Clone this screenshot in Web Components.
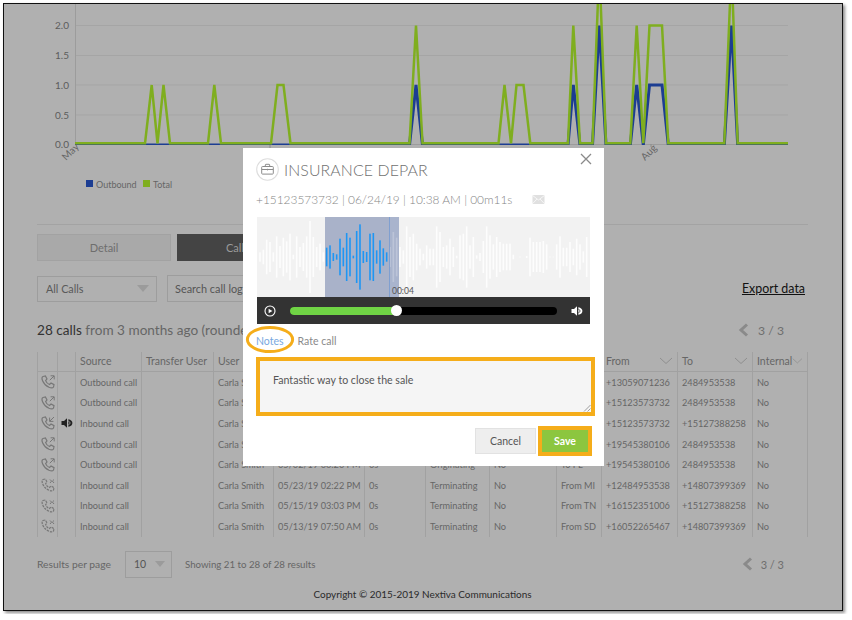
<!DOCTYPE html>
<html><head><meta charset="utf-8">
<style>
html,body{margin:0;padding:0;background:#fff;font-family:Lato,"Open Sans",sans-serif}
</style></head><body>
<call-app>
  <call-chart></call-chart>
  <call-controls></call-controls>
  <call-table></call-table>
  <call-footer></call-footer>
  <call-modal></call-modal>
</call-app>
<script>
const CHEV=(w=14,c='#8f8f8f')=>`<svg width="${w}" height="8" viewBox="0 0 14 8"><path d="M1 1l6 5.5L13 1" fill="none" stroke="${c}" stroke-width="1"/></svg>`;
const PAGER=(s)=>`<span class="pg" style="${s||''}"><svg width="11" height="14" viewBox="0 0 11 14"><path d="M9 1.5L3 7l6 5.5" fill="none" stroke="#8a8a8a" stroke-width="3"/></svg><span>3 / 3</span></span>`;
const PHONE='M3 2.5L5.4 2 7 5 5.6 6.6C6.3 8.5 7.6 9.8 9.5 10.5L11 9l3 1.6-.5 2.4c-.6 1-2.5 1.1-4.5.3C6 12 4 10 2.7 7 1.8 5 2 3 3 2.5Z';
const SPK=(c)=>`<svg width="12" height="12" viewBox="0 0 12 12"><path d="M.5 4H3L6 1.2v9.6L3 8H.5Z" fill="${c}"/><path d="M7.3 2.2C10 2.6 11.4 4.3 11.4 6S10 9.4 7.3 9.8Z" fill="${c}"/><path d="M7.3 4.2C8.4 4.4 9 5.2 9 6S8.4 7.6 7.3 7.8" fill="none" stroke="${c==='#fff'?'#333':'#b0b0b0'}" stroke-width=".8"/></svg>`;

class CallApp extends HTMLElement{constructor(){super();this.attachShadow({mode:'open'}).innerHTML=`<style>
:host{display:block;position:relative;box-sizing:border-box;width:840px;height:608px;margin:3px;border:1px solid #111;background:#b0b0b0;box-shadow:2px 2px 3px rgba(0,0,0,.45);padding:0 34px 0 33px;overflow:hidden;color:#666;font-family:Lato,"Open Sans",sans-serif}
</style><slot></slot>`}}

class CallChart extends HTMLElement{constructor(){super();
const B=143.3,V1=85,V2=25.5,V3=-34,BB=145;
const g=(a,b)=>[[75,b],...a,[788,b]].map(p=>p.join(',')).join(' ');
const green=g([[145,B],[151.7,V1],[157.5,B],[163.5,V1],[170,B],[208,B],[214.3,V1],[221,B],[271,B],[277.5,V1],[283.5,V1],[290.5,B],[409.5,B],[416,V2],[422.5,B],[498.5,B],[504.5,V1],[511,B],[516.5,V1],[523.5,V1],[530.3,B],[568,B],[573.3,V2],[580,B],[592.5,B],[599.3,V3],[606,B],[630.3,B],[636.7,V2],[643.3,B],[649.5,V2],[662,V2],[668.3,B],[724.3,B],[731.5,V3],[737.7,B]],B);
const blue=g([[409.5,BB],[416,V1],[422.5,BB],[568,BB],[573.3,V1],[580,BB],[592.5,BB],[599.3,V2],[606,BB],[630.3,BB],[636.7,V1],[643.3,BB],[649.5,V1],[662,V1],[668.3,BB],[724.3,BB],[731.5,V2],[737.7,BB]],BB);
this.attachShadow({mode:'open'}).innerHTML=`<style>
:host{display:block;height:220px;margin:0 -34px 0 -33px;border-bottom:0}
svg{display:block}
text{font-family:Lato,sans-serif;font-size:10px;fill:#5c5c5c}
.s{font-size:9px;fill:#666}
</style>
<svg width="838" height="220" viewBox="4 4 838 220">
<defs><clipPath id="c"><rect x="0" y="0" width="850" height="145"/></clipPath></defs>
<g stroke="#a5a5a5" stroke-width="1"><path d="M75 25.5H788M75 55.5H788M75 85H788M75 115H788"/></g>
<path d="M75.5 4V144M75 144.5H788" stroke="#9c9c9c" fill="none"/>
<path d="M270 144v4M651 144v3" stroke="#8a8a8a"/>
<text x="55" y="29">2.0</text><text x="55" y="59">1.5</text><text x="55" y="88.5">1.0</text><text x="55" y="118.5">0.5</text><text x="55" y="147.5">0.0</text>
<polyline clip-path="url(#c)" points="${blue}" fill="none" stroke="#1c3d92" stroke-width="3" stroke-linejoin="miter"/>
<polyline points="${green}" fill="none" stroke="#7fae1f" stroke-width="2.5" stroke-linejoin="miter" stroke-miterlimit="4"/>
<text class="s" style="font-size:10px" transform="translate(66 161) rotate(-45)">May</text>
<text class="s" style="font-size:10px" transform="translate(645 161) rotate(-45)">Aug</text>
<rect x="86" y="180" width="7" height="7" fill="#1c3d92"/><text class="s" x="96" y="187.5">Outbound</text>
<rect x="143" y="180" width="7" height="7" fill="#7fae1f"/><text class="s" x="153" y="187.5">Total</text>
</svg>`}}

class CallControls extends HTMLElement{constructor(){super();this.attachShadow({mode:'open'}).innerHTML=`<style>
:host{display:block;border-top:1px solid #a3a3a3;font-size:11.5px;color:#5f5f5f}
.tabs{display:flex;gap:6px;margin-top:9px;height:27px}
.tab{box-sizing:border-box;width:134px;display:flex;align-items:center;justify-content:center;background:#a9a9a9;border:1px solid #a2a2a2;color:#6e6e6e;font-size:11px}
.tab.on{background:#444;border-color:#444;color:#9a9a9a;width:116px}
.filters{display:flex;align-items:center;gap:10px;margin-top:14px;height:27px}
.sel{box-sizing:border-box;width:120px;height:26px;border:1px solid #9d9d9d;display:flex;align-items:center;justify-content:space-between;padding:0 7px 0 8px;font-size:10.8px;color:#5a5a5a}
.arrow{width:0;height:0;border:6px solid transparent;border-top:7px solid #9b9b9b;border-bottom:0}
.search{box-sizing:border-box;width:200px;height:27px;border:1px solid #9d9d9d;padding-left:7px;display:flex;align-items:center;font-size:10.9px;color:#555}
.export{margin-left:auto;margin-right:3px;color:#111;text-decoration:underline;font-size:12.4px}
.sum{display:flex;align-items:center;justify-content:space-between;margin-top:18px;height:20px;font-size:13.6px;color:#666}
.sum b{font-weight:400;color:#333}
.pg{display:inline-flex;align-items:center;gap:9px;margin-right:24px;font-size:12.2px;color:#6e6e6e}
</style>
<div class="tabs"><div class="tab">Detail</div><div class="tab on">Call</div></div>
<div class="filters"><div class="sel">All Calls<span class="arrow"></span></div><div class="search">Search call log</div><span class="export">Export data</span></div>
<div class="sum"><span><b>28 calls</b> from 3 months ago (rounded)</span>${PAGER()}</div>`}}

class CallTable extends HTMLElement{constructor(){super();
const cols=[20,18,66,72,60,91,61,64,67,45,76,75,56];
const ph=(t)=>{const arrow={o:'<path d="M9.8 6.2L14 2M10.6 1.8H14.2V5.4" fill="none" stroke="#777" stroke-width="1"/>',i:'<path d="M14 2L9.8 6.2M9.6 2.6V6.4H13.4" fill="none" stroke="#777" stroke-width="1"/>',t:'<path d="M10 2.5l1.6 1.6M14 2.5l-1.6 1.6L14 6M10 6l1.6-1.9" fill="none" stroke="#777" stroke-width="1"/>'}[t];
return `<svg width="16" height="16" viewBox="0 0 16 16"><path d="${PHONE}" fill="none" stroke="#777" stroke-width="1.2" ${t==='t'?'stroke-dasharray="2.4 .9"':''}/>${arrow}</svg>`};
const rows=[
['o','','Outbound call','Carla Smith','','','','','','+13059071236','2484953538','No'],
['o','','Outbound call','Carla Smith','','','','','','+15123573732','2484953538','No'],
['i','s','Inbound call','Carla Smith','','','','','','+15123573732','+15127388258','No'],
['o','','Outbound call','Carla Smith','','','','','','+19545380106','2484953538','No'],
['o','','Outbound call','Carla Smith','05/02/19 06:20 PM','0s','Originating','No','To FL','+19545380106','2484953538','No'],
['t','','Inbound call','Carla Smith','05/23/19 02:22 PM','0s','Terminating','No','From MI','+12484953538','+14807399369','No'],
['t','','Inbound call','Carla Smith','05/15/19 03:03 PM','0s','Terminating','No','From TN','+16152351006','+15127388258','No'],
['t','','Inbound call','Carla Smith','05/13/19 07:50 AM','0s','Terminating','No','From SD','+16052265467','+14807399369','No']];
const head=['','','Source','Transfer User','User','','','','','','From','To','Internal'];
const ch={10:1,11:1,12:1};
let h='';
head.forEach((t,i)=>{h+=`<div class="c h${i===12?' end':''}"><span>${t}</span>${ch[i]?CHEV():''}</div>`});
rows.forEach(r=>{
 h+=`<div class="c ic">${ph(r[0])}</div><div class="c ic">${r[1]?SPK('#222'):''}</div>`;
 h+=`<div class="c">${r[2]}</div><div class="c"></div>`;
 r.slice(3).forEach((t,i,a)=>h+=`<div class="c${i===a.length-1?' end':''}">${t}</div>`);
});
this.attachShadow({mode:'open'}).innerHTML=`<style>
:host{display:grid;grid-template-columns:${cols.join('px ')}px;grid-auto-rows:20.6px;grid-template-rows:20px;margin-top:12px;padding-bottom:1px;font-size:9.2px;color:#666}
.c{box-sizing:border-box;border-left:1px solid #a1a1a1;padding-left:4px;display:flex;align-items:center;white-space:nowrap;overflow:hidden;min-width:0}
.c.end{border-right:1px solid #a1a1a1}
.h{border-bottom:1px solid #a1a1a1;justify-content:space-between;padding:0 4px 2px 4px;font-size:10.5px;height:20px}
.ic{padding-left:1px;justify-content:center}
</style>${h}`;
}}

class CallFooter extends HTMLElement{constructor(){super();this.attachShadow({mode:'open'}).innerHTML=`<style>
:host{display:block;font-size:10.3px;color:#666}
.bar{display:flex;align-items:center;margin-top:13px;height:27px}
.sel{box-sizing:border-box;width:47px;height:27px;border:1px solid #9d9d9d;margin:0 13px 0 14px;display:flex;align-items:center;justify-content:space-between;padding:0 6px 0 8px;color:#555;font-size:10.5px}
.arrow{width:0;height:0;border:5px solid transparent;border-top:6px solid #9b9b9b;border-bottom:0}
.show{font-size:9.7px}
.pg{display:inline-flex;align-items:center;gap:8px;margin-left:auto;margin-right:24px;font-size:11px;color:#6e6e6e}
.copy{margin-top:8px;height:16px;line-height:16px;text-align:center;color:#2a2a2a;font-size:9.95px}
</style>
<div class="bar"><span>Results per page</span><div class="sel">10<span class="arrow"></span></div><span class="show">Showing 21 to 28 of 28 results</span>${PAGER()}</div>
<div class="copy">Copyright © 2015-2019 Nextiva Communications</div>`}}

class CallWave extends HTMLElement{constructor(){super();
const hs=[14,22,52,45,14,62,33,58,47,70,7,62,30,42,62,108,60,30,40,14,28,35,12,8,55,28,72,58,4,78,98,18,15,70,72,20,50,26,14,30,75,58,30,20,92,60,70,40,25,10,35,25,25,92,75,30,35,55,30,4,65,70,92,35,60,5,12,48,92,65,38,60,45,40,40,40,7,0,1,0,3,58,45,45,45,48,38,1,1,38,62,28,28,45,25,55,38,17,60];
let b='';hs.forEach((h,i)=>{if(!h)return;const x=260+i*3.3333-0.8,hh=h/3;const blue=i>=20&&i<=38;b+=`<rect x="${x-257}" y="${40-hh}" width="1.6" height="${2*hh}" fill="${blue?'#1e96f3':'#fff'}" ${blue?'':'opacity=".85"'}/>`});
this.attachShadow({mode:'open'}).innerHTML=`<style>
:host{display:block;position:relative;width:333px;height:80px;background:#f2f2f2;overflow:hidden}
svg{display:block;position:relative}
.sel{position:absolute;left:68px;top:0;width:74px;height:80px;background:rgba(80,100,150,.45)}
.cur{position:absolute;left:132px;top:0;width:1px;height:80px;background:#7f9fd0}
.t{position:absolute;left:135px;top:69px;font-size:8.5px;line-height:11px;color:#555}
.sel2{position:absolute;left:132px;top:0;width:10px;height:80px;background:rgba(170,180,205,.75)}
</style><div class="sel"></div><svg width="333" height="80">${b}</svg><div class="sel2"></div><div class="cur"></div><span class="t">00:04</span>`}}

class CallPlayer extends HTMLElement{constructor(){super();this.attachShadow({mode:'open'}).innerHTML=`<style>
:host{display:flex;align-items:center;box-sizing:border-box;width:333px;height:27px;background:#333;padding:0 8px 0 7px}
svg{display:block;flex:none}
.track{position:relative;flex:none;width:267px;height:8px;border-radius:4px;background:#000;margin:0 14px 0 14px}
.fill{width:106px;height:8px;border-radius:4px;background:#70d445}
.dot{position:absolute;left:101px;top:-1.5px;width:11px;height:11px;border-radius:50%;background:#fff}
</style>
<svg width="12" height="12" viewBox="0 0 12 12"><circle cx="6" cy="6" r="5" fill="none" stroke="#fff" stroke-width="1.1"/><path d="M4.6 3.7L8.4 6 4.6 8.3Z" fill="#fff"/></svg>
<div class="track"><div class="fill"></div><div class="dot"></div></div>${SPK('#fff')}`}}

class CallModal extends HTMLElement{constructor(){super();this.attachShadow({mode:'open'}).innerHTML=`<style>
:host{position:absolute;left:239px;top:144px;box-sizing:border-box;width:361px;height:318px;background:#fff;padding:9px 14px 0;color:#999;font-family:Lato,sans-serif;z-index:2}
.close{position:absolute;left:337px;top:5px;display:block}
.head{display:flex;align-items:center;gap:5px;height:24px;margin-left:-1px}
.title{font-size:15.9px;font-weight:300;color:#707070;letter-spacing:.1px}
.info{display:flex;align-items:center;margin:10px 0 0 -1px;height:16px;font-size:11.9px;font-weight:300;color:#858585}
.info svg{margin-left:20px}
.stage{margin-top:10px}
.nav{position:relative;display:flex;gap:14px;align-items:center;height:33px;font-size:10.5px;margin-left:-1px}
.n{color:#78a8e0}.r{color:#8a8a8a}
.ring{position:absolute;left:-10px;top:2px;overflow:visible}
.note{box-sizing:border-box;position:relative;width:339px;height:59px;margin-left:-1px;border:4px solid #f5ad1a;background:#f5f5f5;padding:12px 13px;font-size:10.6px;line-height:15px;color:#555}
.grip{position:absolute;right:0;bottom:0}
.foot{display:flex;justify-content:flex-end;align-items:center;gap:2px;margin:10px -2px 0 0;font-size:10.5px}
.btn{box-sizing:border-box;display:flex;align-items:center;justify-content:center}
.cancel{width:61px;height:26px;background:#eee;border:1px solid #e2e2e2;color:#555}
.save{width:54px;height:30px;border:4px solid #f5ad1a;background:#8cc63f;color:#fff;font-weight:700}
</style>
<svg class="close" width="12" height="12" viewBox="0 0 12 12"><path d="M1 1l10 10M11 1L1 11" stroke="#8a8a8a" stroke-width="1.3" fill="none"/></svg>
<div class="head">
<svg width="23" height="23" viewBox="0 0 23 23"><circle cx="11.5" cy="11.5" r="10.8" fill="#fff" stroke="#ddd" stroke-width="1.1"/><path d="M6.5 8.5h10a.8.8 0 0 1 .8.8v6a.8.8 0 0 1-.8.8h-10a.8.8 0 0 1-.8-.8v-6a.8.8 0 0 1 .8-.8ZM9.3 8.5V7a.7.7 0 0 1 .7-.7h3a.7.7 0 0 1 .7.7v1.5M5.8 11.5h11.4M11.5 10.8v1.6" fill="none" stroke="#8c8c8c" stroke-width="1"/></svg>
<span class="title">INSURANCE DEPAR</span></div>
<div class="info"><span>+15123573732 | 06/24/19 | 10:38 AM | 00m11s</span>
<svg width="13" height="9" viewBox="0 0 12 9"><rect width="12" height="9" rx="1" fill="#e0e0e0"/><path d="M.5.8L6 5l5.5-4.2M.5 8.2L4.5 4M11.5 8.2L7.5 4" stroke="#fff" stroke-width=".7" fill="none"/></svg></div>
<div class="stage"><call-wave></call-wave><call-player></call-player></div>
<div class="nav"><span class="n">Notes</span><span class="r">Rate call</span>
<svg class="ring" width="48" height="27" viewBox="0 0 48 27"><ellipse cx="24" cy="13.5" rx="22.6" ry="12" fill="none" stroke="#f5ad1a" stroke-width="3"/></svg></div>
<div class="note">Fantastic way to close the sale
<svg class="grip" width="8" height="8" viewBox="0 0 8 8"><path d="M1 7.5L7.5 1M4.5 7.5L7.5 4.5" stroke="#888" stroke-width=".8"/></svg></div>
<div class="foot"><div class="btn cancel">Cancel</div><div class="btn save">Save</div></div>`}}

customElements.define('call-app',CallApp);
customElements.define('call-chart',CallChart);
customElements.define('call-controls',CallControls);
customElements.define('call-table',CallTable);
customElements.define('call-footer',CallFooter);
customElements.define('call-wave',CallWave);
customElements.define('call-player',CallPlayer);
customElements.define('call-modal',CallModal);
</script>
</body></html>
